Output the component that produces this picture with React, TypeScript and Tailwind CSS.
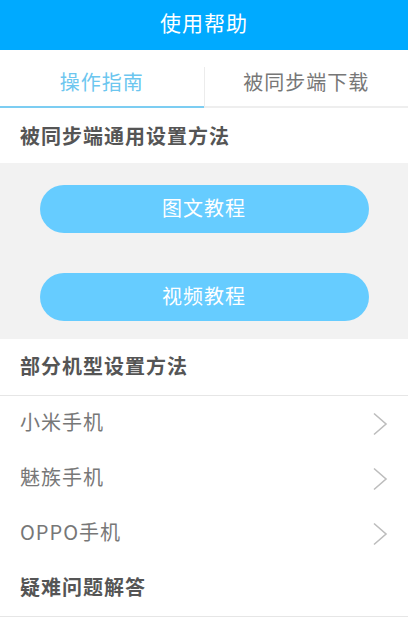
const font = { fontFamily: '"Noto Sans CJK SC", "Noto Sans", sans-serif' };

function Chevron() {
  return (
    <svg width="16" height="24" viewBox="0 0 16 24" fill="none" className="shrink-0">
      <path d="M2 1.5 L14 12 L2 22.5" stroke="#bdbdbd" strokeWidth="1.6" strokeLinejoin="miter" />
    </svg>
  );
}

function PillButton({ label }: { label: string }) {
  return (
    <button className="h-[48px] w-[329px] rounded-full bg-[#66ccff] pb-[2px] text-[20px] tracking-[1px] text-white">
      {label}
    </button>
  );
}

export default function App() {
  const phones = ["小米手机", "魅族手机", "OPPO手机"];

  return (
    <div className="flex h-[629px] w-[408px] flex-col overflow-hidden bg-white" style={font}>
      <header className="flex h-[50px] shrink-0 items-center justify-center bg-[#00aaff] pb-[5px] text-[21px] tracking-[1px] text-white">
        使用帮助
      </header>

      <div className="flex h-[58px] shrink-0">
        <div className="flex flex-1 items-center justify-center border-b-2 border-[#7ccdf2] pt-[8px] text-[20px] tracking-[1px] text-[#6cc6ef]">
          操作指南
        </div>
        <div className="mt-[17px] w-px bg-[#ececec]" />
        <div className="flex flex-1 items-center justify-center border-b-2 border-[#eeeeee] pt-[8px] text-[20px] tracking-[1px] text-[#777777]">
          被同步端下载
        </div>
      </div>

      <div className="flex h-[55px] shrink-0 items-center pl-[20px] text-[20px] font-bold tracking-[1px] text-[#555555]">
        被同步端通用设置方法
      </div>

      <div className="flex h-[176px] shrink-0 flex-col items-center gap-[40px] bg-[#f2f2f2] pt-[22px]">
        <PillButton label="图文教程" />
        <PillButton label="视频教程" />
      </div>

      <div className="flex h-[57px] shrink-0 items-center border-b border-[#e6e6e6] pb-[2px] pl-[20px] text-[20px] font-bold tracking-[1px] text-[#555555]">
        部分机型设置方法
      </div>

      {phones.map((p) => (
        <div key={p} className="flex h-[55px] shrink-0 items-center justify-between pl-[20px] pr-[20px]">
          <span className="pb-[3px] text-[20px] tracking-[1px] text-[#777777]">{p}</span>
          <Chevron />
        </div>
      ))}

      <div className="flex h-[56px] shrink-0 items-center border-b border-[#e6e6e6] pb-[3px] pl-[20px] text-[20px] font-bold tracking-[1px] text-[#555555]">
        疑难问题解答
      </div>
    </div>
  );
}
